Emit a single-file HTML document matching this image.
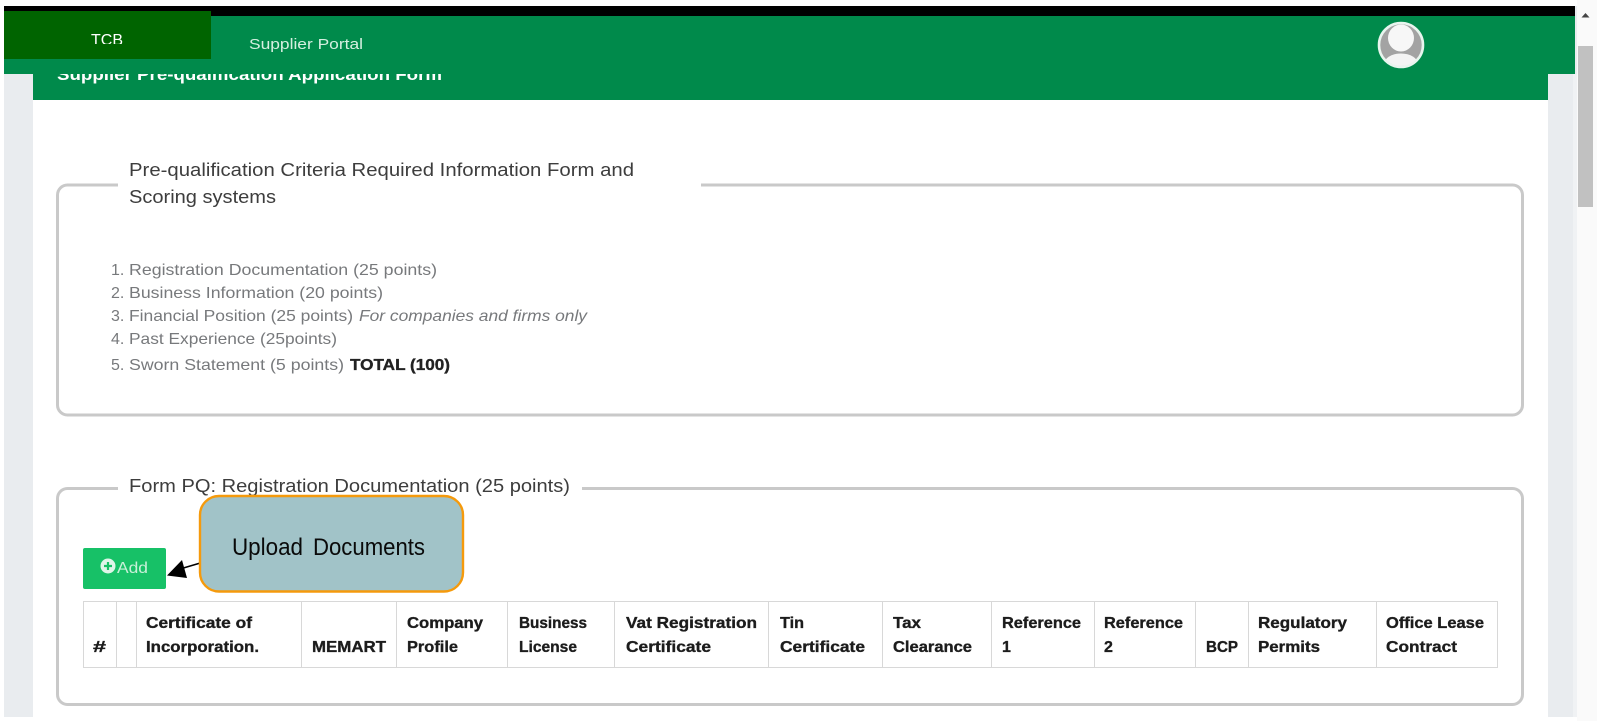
<!DOCTYPE html>
<html lang="en">
<head>
<meta charset="utf-8">
<title>Supplier Portal</title>
<style>
html,body{margin:0;padding:0;width:1597px;height:721px;overflow:hidden;background:#fff}
svg{display:block;font-family:"Liberation Sans",sans-serif}
.h{font-size:18px;fill:#3c3c3c}
.l{font-size:16px;fill:#77797b}
.b{font-size:16px;font-weight:bold;fill:#1c1c1c;stroke:#1c1c1c;stroke-width:.35px}
</style>
</head>
<body>
<svg width="1597" height="721" viewBox="0 0 1597 721" xmlns="http://www.w3.org/2000/svg">
<defs>
<clipPath id="c1"><rect x="0" y="74" width="600" height="30"/></clipPath>
<clipPath id="c2"><rect x="80" y="20" width="60" height="24"/></clipPath>
<clipPath id="av"><circle cx="1401" cy="45" r="21"/></clipPath>
<filter id="s" x="-2%" y="-2%" width="104%" height="104%"><feGaussianBlur stdDeviation="0.35"/></filter>
</defs>
<rect width="1597" height="721" fill="#fff"/>
<!-- page bg -->
<rect x="4" y="6" width="1573" height="711" fill="#e9ecef"/>
<rect x="1573" y="74" width="4" height="643" fill="#f0f2f4"/>
<rect x="33" y="74" width="1515" height="647" fill="#fff"/>
<rect x="33" y="717" width="1515" height="4" fill="#fff"/>
<!-- top -->
<rect x="4" y="6" width="1571" height="10" fill="#000"/>
<rect x="4" y="16" width="1571" height="58" fill="#008a4b"/>
<rect x="33" y="74" width="1515" height="26" fill="#008a4b"/>
<rect x="4" y="11" width="207" height="48" fill="#006400"/>
<g filter="url(#s)">
<text x="91" y="45" font-size="16" fill="#fff" clip-path="url(#c2)" textLength="32" lengthAdjust="spacingAndGlyphs">TCB</text>
<text x="249" y="49" font-size="15" fill="#d5efe0" textLength="114" lengthAdjust="spacingAndGlyphs">Supplier Portal</text>
<text x="57" y="80" font-size="17" font-weight="bold" fill="#fff" clip-path="url(#c1)" textLength="385" lengthAdjust="spacingAndGlyphs">Supplier Pre-qualification Application Form</text>
</g>
<!-- avatar -->
<circle cx="1401" cy="45" r="22" fill="#a3a3a3" stroke="#e8f5ee" stroke-width="2.6"/>
<g clip-path="url(#av)" filter="url(#s)">
<ellipse cx="1401" cy="38" rx="13" ry="13.5" fill="#f7f7f7"/>
<ellipse cx="1401" cy="64" rx="17" ry="10.5" fill="#f4f4f4"/>
</g>
<!-- scrollbar -->
<rect x="1577" y="0" width="20" height="721" fill="#fafafa"/>
<path d="M1581.5 17.5L1585.5 13L1589.5 17.5Z" fill="#444"/>
<rect x="1578" y="46" width="15" height="161" fill="#c1c1c1"/>
<!-- fieldset 1 -->
<rect x="57.5" y="185" width="1465" height="230" rx="10" fill="#fff" stroke="#c9c9c9" stroke-width="3"/>
<rect x="118" y="180" width="583" height="10" fill="#fff"/>
<g filter="url(#s)">
<text class="h" x="129" y="176" textLength="505" lengthAdjust="spacingAndGlyphs">Pre-qualification Criteria Required Information Form and</text>
<text class="h" x="129" y="203" textLength="147" lengthAdjust="spacingAndGlyphs">Scoring systems</text>
<text class="l" x="111" y="275">1.</text><text class="l" x="129" y="275" textLength="308" lengthAdjust="spacingAndGlyphs">Registration Documentation (25 points)</text>
<text class="l" x="111" y="298">2.</text><text class="l" x="129" y="298" textLength="254" lengthAdjust="spacingAndGlyphs">Business Information (20 points)</text>
<text class="l" x="111" y="321">3.</text><text class="l" x="129" y="321" textLength="224" lengthAdjust="spacingAndGlyphs">Financial Position (25 points)</text>
<text class="l" x="359" y="321" font-style="italic" textLength="228" lengthAdjust="spacingAndGlyphs">For companies and firms only</text>
<text class="l" x="111" y="344">4.</text><text class="l" x="129" y="344" textLength="208" lengthAdjust="spacingAndGlyphs">Past Experience (25points)</text>
<text class="l" x="111" y="370">5.</text><text class="l" x="129" y="370" textLength="215" lengthAdjust="spacingAndGlyphs">Sworn Statement (5 points)</text>
<text x="350" y="370" font-size="16" font-weight="bold" fill="#222" stroke="#222" stroke-width=".35" textLength="100" lengthAdjust="spacingAndGlyphs">TOTAL (100)</text>
</g>
<!-- fieldset 2 -->
<rect x="57.5" y="488.5" width="1465" height="216" rx="10" fill="#fff" stroke="#c9c9c9" stroke-width="3"/>
<rect x="118" y="484" width="464" height="10" fill="#fff"/>
<g filter="url(#s)">
<text class="h" x="129" y="492" textLength="441" lengthAdjust="spacingAndGlyphs">Form PQ: Registration Documentation (25 points)</text>
</g>
<!-- add button -->
<rect x="83" y="548" width="83" height="41" rx="2" fill="#17c167"/>
<circle cx="108" cy="566" r="7.5" fill="#dff5e8"/>
<path d="M108 562v8M104 566h8" stroke="#17c167" stroke-width="2.2"/>
<text x="117" y="573" font-size="16" fill="#c8f0d8" textLength="31" lengthAdjust="spacingAndGlyphs">Add</text>
<!-- table -->
<rect x="83.5" y="601.5" width="1414" height="66" fill="#fff" stroke="#d8d8d8"/>
<path d="M116.5 601v67M136.5 601v67M301.5 601v67M396.5 601v67M507.5 601v67M614.5 601v67M768.5 601v67M882.5 601v67M991.5 601v67M1094.5 601v67M1195.5 601v67M1248.5 601v67M1376.5 601v67" stroke="#d8d8d8" fill="none"/>
<g filter="url(#s)">
<text class="b" x="93" y="652" textLength="13" lengthAdjust="spacingAndGlyphs">#</text>
<text class="b" x="146" y="628" textLength="106" lengthAdjust="spacingAndGlyphs">Certificate of</text>
<text class="b" x="146" y="652" textLength="113" lengthAdjust="spacingAndGlyphs">Incorporation.</text>
<text class="b" x="312" y="652" textLength="74" lengthAdjust="spacingAndGlyphs">MEMART</text>
<text class="b" x="407" y="628" textLength="76" lengthAdjust="spacingAndGlyphs">Company</text>
<text class="b" x="407" y="652" textLength="51" lengthAdjust="spacingAndGlyphs">Profile</text>
<text class="b" x="519" y="628" textLength="68" lengthAdjust="spacingAndGlyphs">Business</text>
<text class="b" x="519" y="652" textLength="58" lengthAdjust="spacingAndGlyphs">License</text>
<text class="b" x="626" y="628" textLength="131" lengthAdjust="spacingAndGlyphs">Vat Registration</text>
<text class="b" x="626" y="652" textLength="85" lengthAdjust="spacingAndGlyphs">Certificate</text>
<text class="b" x="780" y="628" textLength="24" lengthAdjust="spacingAndGlyphs">Tin</text>
<text class="b" x="780" y="652" textLength="85" lengthAdjust="spacingAndGlyphs">Certificate</text>
<text class="b" x="893" y="628" textLength="28" lengthAdjust="spacingAndGlyphs">Tax</text>
<text class="b" x="893" y="652" textLength="79" lengthAdjust="spacingAndGlyphs">Clearance</text>
<text class="b" x="1002" y="628" textLength="79" lengthAdjust="spacingAndGlyphs">Reference</text>
<text class="b" x="1002" y="652">1</text>
<text class="b" x="1104" y="628" textLength="79" lengthAdjust="spacingAndGlyphs">Reference</text>
<text class="b" x="1104" y="652">2</text>
<text class="b" x="1206" y="652" textLength="32" lengthAdjust="spacingAndGlyphs">BCP</text>
<text class="b" x="1258" y="628" textLength="89" lengthAdjust="spacingAndGlyphs">Regulatory</text>
<text class="b" x="1258" y="652" textLength="62" lengthAdjust="spacingAndGlyphs">Permits</text>
<text class="b" x="1386" y="628" textLength="98" lengthAdjust="spacingAndGlyphs">Office Lease</text>
<text class="b" x="1386" y="652" textLength="71" lengthAdjust="spacingAndGlyphs">Contract</text>
</g>
<!-- arrow + callout -->
<path d="M202 562.5L180 569" stroke="#000" stroke-width="1.6" fill="none"/>
<path d="M167 575.5L182 560L187 578Z" fill="#000"/>
<rect x="200" y="496" width="263" height="95.5" rx="19" fill="#a1c3c8" stroke="#f59a0c" stroke-width="2.4"/>
<text x="232" y="555" font-size="24" fill="#0a0a0a" textLength="71" lengthAdjust="spacingAndGlyphs">Upload</text>
<text x="313" y="555" font-size="24" fill="#0a0a0a" textLength="112" lengthAdjust="spacingAndGlyphs">Documents</text>
</svg>
</body>
</html>
